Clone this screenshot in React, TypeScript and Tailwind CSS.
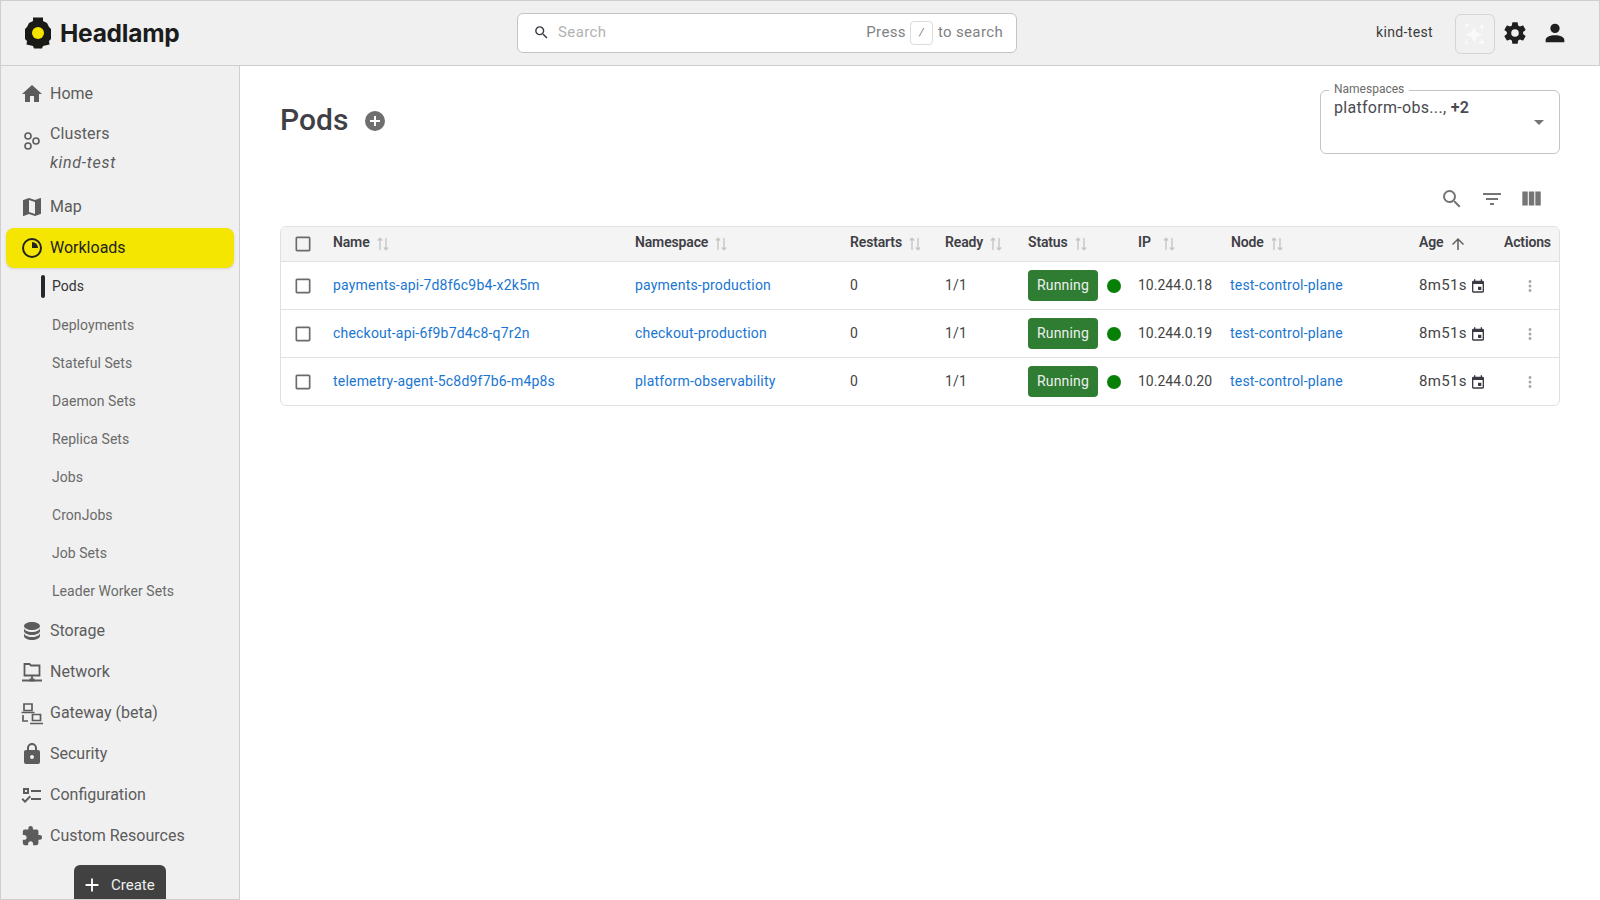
import type { ReactNode } from "react";

const P = {
  home: "M10 20v-6h4v6h5v-8h3L12 3 2 12h3v8z",
  map: "M15,19L9,16.89V5L15,7.11M20.5,3C20.44,3 20.39,3 20.34,3L15,5.1L9,3L3.36,4.9C3.15,4.97 3,5.15 3,5.38V20.5A0.5,0.5 0 0,0 3.5,21C3.55,21 3.61,21 3.66,20.97L9,18.9L15,21L20.64,19.1C20.85,19 21,18.85 21,18.62V3.5A0.5,0.5 0 0,0 20.5,3Z",
  storage: "M12,3C7.58,3 4,4.79 4,7C4,9.21 7.58,11 12,11C16.42,11 20,9.21 20,7C20,4.79 16.42,3 12,3M4,9V12C4,14.21 7.58,16 12,16C16.42,16 20,14.21 20,12V9C20,11.21 16.42,13 12,13C7.58,13 4,11.21 4,9M4,14V17C4,19.21 7.58,21 12,21C16.42,21 20,19.21 20,17V14C20,16.21 16.42,18 12,18C7.58,18 4,16.21 4,14Z",
  lock: "M12,17A2,2 0 0,0 14,15C14,13.89 13.1,13 12,13A2,2 0 0,0 10,15A2,2 0 0,0 12,17M18,8A2,2 0 0,1 20,10V20A2,2 0 0,1 18,22H6A2,2 0 0,1 4,20V10C4,8.89 4.9,8 6,8H7V6A5,5 0 0,1 12,1A5,5 0 0,1 17,6V8H18M12,3A3,3 0 0,0 9,6V8H15V6A3,3 0 0,0 12,3Z",
  config: "M3 5H9V11H3V5M5 7V9H7V7H5M11 7H21V9H11V7M11 15H21V17H11V15M5 20L1.5 16.5L2.91 15.09L5 17.17L9.59 12.59L11 14L5 20Z",
  puzzle: "M20.5,11H19V7C19,5.89 18.1,5 17,5H13V3.5A2.5,2.5 0 0,0 10.5,1A2.5,2.5 0 0,0 8,3.5V5H4A2,2 0 0,0 2,7V10.8H3.5C5,10.8 6.2,12 6.2,13.5C6.2,15 5,16.2 3.5,16.2H2V20A2,2 0 0,0 4,22H7.8V20.5C7.8,19 9,17.8 10.5,17.8C12,17.8 13.2,19 13.2,20.5V22H17A2,2 0 0,0 19,20V16H20.5A2.5,2.5 0 0,0 23,13.5A2.5,2.5 0 0,0 20.5,11Z",
  cog: "M12,15.5A3.5,3.5 0 0,1 8.5,12A3.5,3.5 0 0,1 12,8.5A3.5,3.5 0 0,1 15.5,12A3.5,3.5 0 0,1 12,15.5M19.43,12.97C19.47,12.65 19.5,12.33 19.5,12C19.5,11.67 19.47,11.34 19.43,11L21.54,9.37C21.73,9.22 21.78,8.95 21.66,8.73L19.66,5.27C19.54,5.05 19.27,4.96 19.05,5.05L16.56,6.05C16.04,5.66 15.5,5.32 14.87,5.07L14.5,2.42C14.46,2.18 14.25,2 14,2H10C9.75,2 9.54,2.18 9.5,2.42L9.13,5.07C8.5,5.32 7.96,5.66 7.44,6.05L4.95,5.05C4.73,4.96 4.46,5.05 4.34,5.27L2.34,8.73C2.21,8.95 2.27,9.22 2.46,9.37L4.57,11C4.53,11.34 4.5,11.67 4.5,12C4.5,12.33 4.53,12.65 4.57,12.97L2.46,14.63C2.27,14.78 2.21,15.05 2.34,15.27L4.34,18.73C4.46,18.95 4.73,19.03 4.95,18.95L7.44,17.94C7.96,18.34 8.5,18.68 9.13,18.93L9.5,21.58C9.54,21.82 9.75,22 10,22H14C14.25,22 14.46,21.82 14.5,21.58L14.87,18.93C15.5,18.67 16.04,18.34 16.56,17.94L19.05,18.95C19.27,19.03 19.54,18.95 19.66,18.73L21.66,15.27C21.78,15.05 21.73,14.78 21.54,14.63L19.43,12.97Z",
  account: "M12,4A4,4 0 0,1 16,8A4,4 0 0,1 12,12A4,4 0 0,1 8,8A4,4 0 0,1 12,4M12,14C16.42,14 20,15.79 20,18V20H4V18C4,15.79 7.58,14 12,14Z",
  search: "M15.5 14h-.79l-.28-.27A6.471 6.471 0 0 0 16 9.5 6.5 6.5 0 1 0 9.5 16c1.61 0 3.09-.59 4.23-1.57l.27.28v.79l5 4.99L20.49 19l-4.99-5zm-6 0C7.01 14 5 11.99 5 9.5S7.01 5 9.5 5 14 7.01 14 9.5 11.99 14 9.5 14z",
  filter: "M10 18h4v-2h-4v2zM3 6v2h18V6H3zm3 7h12v-2H6v2z",
  columns: "M10 18h5V5h-5v13zm-6 0h5V5H4v13zM16 5v13h5V5h-5z",
  plusCircle: "M17,13H13V17H11V13H7V11H11V7H13V11H17M12,2A10,10 0 0,0 2,12A10,10 0 0,0 12,22A10,10 0 0,0 22,12A10,10 0 0,0 12,2Z",
  box: "M19 5v14H5V5h14m0-2H5c-1.1 0-2 .9-2 2v14c0 1.1.9 2 2 2h14c1.1 0 2-.9 2-2V5c0-1.1-.9-2-2-2z",
  up: "M4 12l1.41 1.41L11 7.83V20h2V7.83l5.58 5.59L20 12l-8-8-8 8z",
  dots: "M12 8c1.1 0 2-.9 2-2s-.9-2-2-2-2 .9-2 2 .9 2 2 2zm0 2c-1.1 0-2 .9-2 2s.9 2 2 2 2-.9 2-2-.9-2-2-2zm0 6c-1.1 0-2 .9-2 2s.9 2 2 2 2-.9 2-2-.9-2-2-2z",
  calendar: "M19 4h-1V2h-2v2H8V2H6v2H5c-1.1 0-2 .9-2 2v14c0 1.1.9 2 2 2h14c1.1 0 2-.9 2-2V6c0-1.1-.9-2-2-2zm0 16H5V9h14v11zM12 13h5v5h-5z",
  plus: "M19 13h-6v6h-2v-6H5v-2h6V5h2v6h6v2z",
  caret: "M7 10l5 5 5-5z",
};

function Icon({ d, className }: { d: string; className: string }) {
  return (
    <svg viewBox="0 0 24 24" fill="currentColor" className={className}>
      <path d={d} />
    </svg>
  );
}

function Svg({ children }: { children: ReactNode }) {
  return (
    <svg viewBox="0 0 24 24" fill="none" stroke="currentColor" className="w-6 h-6">
      {children}
    </svg>
  );
}

const clustersIcon = (
  <Svg>
    <circle cx="8" cy="7" r="3" strokeWidth="1.6" />
    <circle cx="8" cy="17" r="3" strokeWidth="1.6" />
    <circle cx="16" cy="12" r="3" strokeWidth="1.6" />
  </Svg>
);

const workloadsIcon = (
  <Svg>
    <circle cx="12" cy="12" r="9" strokeWidth="2" />
    <path d="M12 6a6 6 0 0 1 6 6h-6z" fill="currentColor" stroke="none" />
  </Svg>
);

const networkIcon = (
  <Svg>
    <path d="M4.5 4h5l1.5 1.5h8.5v10h-15z" strokeWidth="1.8" />
    <path d="M12 15.5v5M2 20.5h20" strokeWidth="1.8" />
    <path d="M9.5 18.5h5v3h-5z" fill="currentColor" stroke="none" />
  </Svg>
);

const gatewayIcon = (
  <Svg>
    <path d="M4 3h8v6.5H4zM1.5 11.5h13" strokeWidth="1.7" />
    <path d="M3 14v6h5M12.5 13.5h8v6h-8zM10 22.5h13" strokeWidth="1.7" />
  </Svg>
);

const workloads = ["Deployments", "Stateful Sets", "Daemon Sets", "Replica Sets", "Jobs", "CronJobs", "Job Sets", "Leader Worker Sets"];

const bottomNav: { label: string; d?: string; icon?: ReactNode; iconClass?: string }[] = [
  { label: "Storage", d: P.storage },
  { label: "Network", icon: networkIcon },
  { label: "Gateway (beta)", icon: gatewayIcon },
  { label: "Security", d: P.lock },
  { label: "Configuration", d: P.config },
  { label: "Custom Resources", d: P.puzzle, iconClass: "w-[22px] h-[22px] ml-[1px]" },
];

const pods = [
  { name: "payments-api-7d8f6c9b4-x2k5m", ns: "payments-production", ip: "10.244.0.18" },
  { name: "checkout-api-6f9b7d4c8-q7r2n", ns: "checkout-production", ip: "10.244.0.19" },
  { name: "telemetry-agent-5c8d9f7b6-m4p8s", ns: "platform-observability", ip: "10.244.0.20" },
];

const cols = "grid grid-cols-[52px_302px_215px_95px_83px_110px_93px_188px_85px_1fr]";
const headers = ["Name", "Namespace", "Restarts", "Ready", "Status", "IP", "Node"];

function NavRow({ label, d, icon, iconClass }: { label: string; d?: string; icon?: ReactNode; iconClass?: string }) {
  return (
    <div className="h-[41px] flex items-center text-[#5c5c5c]">
      <div className="w-[49px] pl-[19px] shrink-0 flex items-center">
        {icon ? icon : <Icon d={d as string} className={iconClass ?? "w-[24px] h-[24px]"} />}
      </div>
      <span className="text-[16px] tracking-[0px]">{label}</span>
    </div>
  );
}

function SortIcon() {
  return (
    <svg viewBox="0 0 14 16" className="w-[14px] h-[16px] text-[#c4c6c6]" fill="none" stroke="currentColor" strokeWidth="1.4">
      <path d="M4 14V2.5M1.8 4.5 4 2.2l2.2 2.3" />
      <path d="M10 2v11.5M7.8 11.5 10 13.8l2.2-2.3" />
    </svg>
  );
}

function Header() {
  return (
    <header className="h-[66px] shrink-0 flex items-center bg-[#f0f0f0] border border-[#cfcfcf] relative">
      <div className="w-[24px]" />
      <svg viewBox="0 0 26 32" className="w-[26px] h-[32px] text-[#1a1a17]">
        <path
          fill="currentColor"
          d="M8 .5h10V4l4 2 2 4 2 2v10l-2 2 .5 3.5L18 29l-1 2.5H9L8 29l-6.5-1.500L2 24l-2-2V12l2-2 2-4 4-2z"
        />
        <circle cx="13" cy="16" r="6" fill="#f5e400" />
      </svg>
      <span className="ml-[9px] text-[24.5px] font-bold tracking-[-0.25px] text-[#1c1c1c] font-[Inter,sans-serif]">Headlamp</span>

      <div className="absolute left-[516px] top-[12px] w-[500px] h-[40px] bg-white border border-[#c4c4c4] rounded-[6px] flex items-center pl-[15px] pr-[13px]">
        <Icon d={P.search} className="w-[17px] h-[17px] text-[#3a3a44] -translate-y-[1px]" />
        <span className="ml-[8px] text-[15px] text-[#b2b2b2] tracking-[0.4px] -translate-y-[1px]">Search</span>
        <span className="ml-auto text-[15px] text-[#7f7f84] tracking-[0.35px] -translate-y-[1px]">Press</span>
        <span className="ml-[4px] mr-[5px] w-[23px] h-[24px] border border-[#dcdcdc] rounded-[4px] flex items-center justify-center text-[11px] italic text-[#777]">/</span>
        <span className="text-[15px] text-[#7f7f84] tracking-[0.35px] -translate-y-[1px]">to search</span>
      </div>

      <span className="absolute left-[1375px] top-[21px] text-[14px] text-[#3b3b3b] tracking-[0.35px]">kind-test</span>
      <div className="absolute left-[1454px] top-[13px] w-[40px] h-[40px] border border-[#d4d4d4] rounded-[6px] flex items-center justify-center">
        <svg viewBox="0 0 24 24" className="w-[26px] h-[26px]" fill="#fafafa">
          <path d="M11 5l2.2 5.3L19 12.5l-5.8 2.2L11 20l-2.2-5.3L3 12.5l5.8-2.2z" />
          <path d="M18.5 2l1 2.5 2.5 1-2.5 1-1 2.5-1-2.5-2.5-1 2.5-1zM18.5 16l1 2.5 2.5 1-2.5 1-1 2.5-1-2.5-2.5-1 2.5-1z" />
          <path d="M3 3h3.5v1.5H4.5V6H3zM3 18h1.5v2l1.500-1v1.500L3 22z" />
        </svg>
      </div>
      <Icon d={P.cog} className="absolute left-[1501px] top-[19px] w-[26px] h-[26px] text-[#1f1f1f]" />
      <Icon d={P.account} className="absolute left-[1540px] top-[18px] w-[28px] h-[28px] text-[#1f1f1f]" />
    </header>
  );
}

function Sidebar() {
  return (
    <aside className="w-[240px] shrink-0 h-full bg-[#f0f0f0] border-l border-r border-b border-[#cfcfcf] pt-[7px] overflow-hidden">
      <NavRow label="Home" d={P.home} />
      <div className="h-[72px] flex items-start text-[#5c5c5c]">
        <div className="w-[49px] pl-[19px] pt-[15px] shrink-0">{clustersIcon}</div>
        <div className="flex flex-col gap-[7px] pt-[9px]">
          <span className="text-[16px] leading-[22px] tracking-[0.1px]">Clusters</span>
          <span className="text-[16px] leading-[22px] italic tracking-[0.7px]">kind-test</span>
        </div>
      </div>
      <NavRow label="Map" d={P.map} />

      <div className="mx-[5px] mt-[1px] h-[40px] rounded-[8px] bg-[#f4e600] shadow-sm flex items-center text-[#222]">
        <div className="w-[44px] pl-[14px] shrink-0">{workloadsIcon}</div>
        <span className="text-[16px]">Workloads</span>
      </div>

      <div className="mt-[1px]">
        <div className="h-[37px] flex items-center relative text-[#333]">
          <div className="absolute left-[40px] top-[6px] w-[4px] h-[23px] rounded-full bg-[#26262b]" />
          <span className="ml-[51px] text-[14px] tracking-[0.05px] -translate-y-[1px]">Pods</span>
        </div>
        {workloads.map((w) => (
          <div key={w} className="h-[38px] flex items-center">
            <span className="ml-[51px] text-[14px] text-[#6a6a6a] tracking-[0.05px]">{w}</span>
          </div>
        ))}
      </div>

      <div>
        {bottomNav.map((n) => (
          <NavRow key={n.label} {...n} />
        ))}
      </div>

      <div className="mt-[9px] ml-[73px] w-[92px] h-[37px] bg-[#414141] rounded-t-[6px] flex items-center pl-[7px] pt-[3px] text-white">
        <Icon d={P.plus} className="w-[22px] h-[22px]" />
        <span className="ml-[8px] text-[15px] text-[#eee]">Create</span>
      </div>
    </aside>
  );
}

function PodRow({ name, ns, ip, last }: { name: string; ns: string; ip: string; last: boolean }) {
  return (
    <div className={`${cols} items-center text-[14px] tracking-[0.2px] text-[#444] ${last ? "h-[47px]" : "h-[48px] border-b border-[#e0e0e0]"}`}>
      <div className="pl-[10px] flex">
        <Icon d={P.box} className="w-[20px] h-[20px] text-[#6b6b6b] ml-[2px]" />
      </div>
      <a className="text-[#1976d2]">{name}</a>
      <a className="text-[#1976d2]">{ns}</a>
      <span>0</span>
      <span>1/1</span>
      <div className="flex items-center">
        <span className="w-[70px] h-[31px] rounded-[4px] bg-[#2e7d32] text-[#f0f0f0] flex items-center justify-center">Running</span>
        <span className="ml-[9px] w-[14px] h-[14px] rounded-full bg-[#078007]" />
      </div>
      <span className="tracking-[0px]">{ip}</span>
      <a className="text-[#1976d2] -translate-x-[1px]">test-control-plane</a>
      <div className="flex items-center">
        <span className="text-[15px] tracking-[0.35px]">8m51s</span>
        <Icon d={P.calendar} className="ml-[3px] w-[16px] h-[16px] text-[#3a3a44]" />
      </div>
      <div className="flex pl-[17px]">
        <Icon d={P.dots} className="w-[18px] h-[18px] text-[#ababab]" />
      </div>
    </div>
  );
}

function PodsTable() {
  return (
    <div className="mt-[14px] border border-[#e0e0e0] rounded-[6px] overflow-hidden">
      <div className={`${cols} h-[35px] items-center bg-[#f4f4f4] border-b border-[#e0e0e0] text-[14px] font-semibold tracking-[-0.15px] text-[#3f3f46]`}>
        <div className="pl-[10px] flex">
          <Icon d={P.box} className="w-[20px] h-[20px] text-[#6b6b6b] ml-[2px]" />
        </div>
        {headers.map((h) => (
          <div key={h} className={`flex items-center ${h === "IP" ? "gap-[11px]" : "gap-[6px]"}`}>
            <span className="-translate-y-[2px]">{h}</span>
            <SortIcon />
          </div>
        ))}
        <div className="flex items-center">
          <span className="-translate-y-[2px]">Age</span>
          <Icon d={P.up} className="ml-[6px] w-[18px] h-[18px] text-[#5f5f5f]" />
        </div>
        <span className="-translate-y-[2px]">Actions</span>
      </div>
      {pods.map((p, i) => (
        <PodRow key={p.name} {...p} last={i === pods.length - 1} />
      ))}
    </div>
  );
}

export default function App() {
  return (
    <div className="w-[1600px] h-[900px] flex flex-col overflow-hidden bg-white font-[Roboto,sans-serif]">
      <Header />
      <div className="flex flex-1 min-h-0">
        <Sidebar />
        <main className="flex-1 min-w-0 pl-[40px] pr-[40px] pt-[24px]">
          <div className="flex items-start">
            <h1 className="mt-[12px] text-[30px] leading-[36px] font-medium text-[#3f3f46]">Pods</h1>
            <Icon d={P.plusCircle} className="ml-[15px] mt-[19px] w-[24px] h-[24px] text-[#6f6f6f]" />
            <div className="ml-auto relative w-[240px] h-[64px] border border-[#c4c4c4] rounded-[6px] pl-[13px] pt-[5px]">
              <span className="absolute left-[8px] -top-[10px] bg-white px-[5px] text-[12px] leading-[16px] text-[#6b6b6b]">Namespaces</span>
              <span className="text-[16px] leading-[22px] text-[#4a4a52] tracking-[0.3px]">
                platform-obs..., <b className="font-semibold">+2</b>
              </span>
              <Icon d={P.caret} className="absolute right-[8px] top-[19px] w-[24px] h-[24px] text-[#757575]" />
            </div>
          </div>

          <div className="mt-[32px] flex justify-end items-center pr-[16px] text-[#757575]">
            <Icon d={P.search} className="w-[24px] h-[24px]" />
            <Icon d={P.filter} className="ml-[16px] w-[24px] h-[24px]" />
            <Icon d={P.columns} className="ml-[14px] w-[26px] h-[26px]" />
          </div>

          <PodsTable />
        </main>
      </div>
    </div>
  );
}
